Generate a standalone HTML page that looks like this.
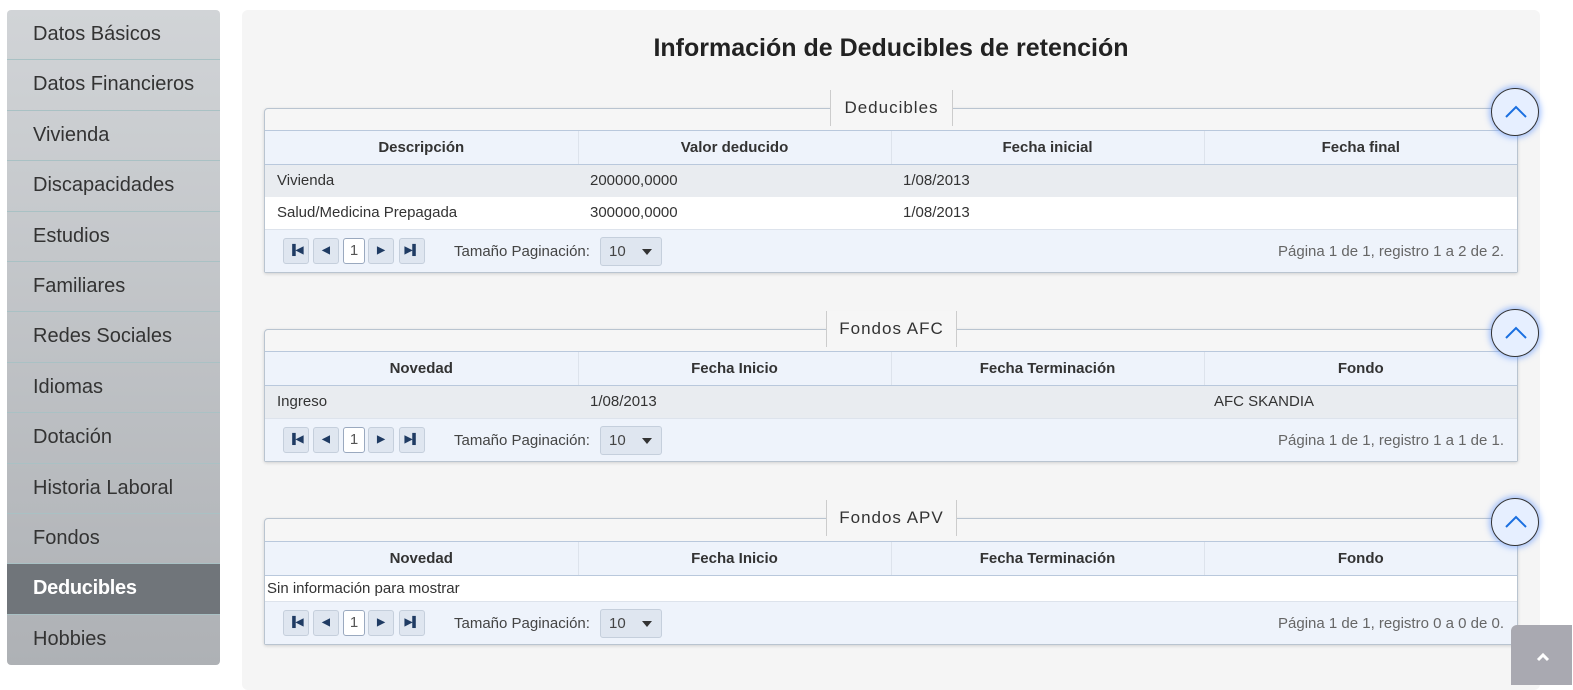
<!DOCTYPE html>
<html><head><meta charset="utf-8"><style>
*{box-sizing:border-box;margin:0;padding:0}
body{width:1573px;height:685px;background:#fff;font-family:"Liberation Sans",sans-serif;position:relative;overflow:hidden}
.side{position:absolute;left:7px;top:10px;width:213px;border-radius:4px;overflow:hidden;background:linear-gradient(#d1d4d7,#aeb1b5)}
.side div{height:50.4px;line-height:48px;padding-left:26px;font-size:20px;color:#333;border-bottom:1px solid #a9c1c4}
.side div.act{background:#70757a;color:#fff;font-weight:bold;letter-spacing:-0.3px}
.side div:last-child{border-bottom:0}
.main{position:absolute;left:242px;top:10px;width:1298px;height:680px;background:#f5f5f5;border-radius:6px}
h1{position:absolute;left:242px;width:1298px;top:34px;text-align:center;font-size:25px;font-weight:bold;color:#222}
.box{position:absolute;left:264px;width:1254px;border:1px solid #b9c4d0;border-radius:4px 4px 2px 2px;background:#f6f6f6;box-shadow:0 1px 3px rgba(0,0,0,.15)}
.leg{position:absolute;height:36px;background:#f6f6f6;border-left:1px solid #ccc;border-right:1px solid #ccc;font-size:17px;letter-spacing:1px;color:#333;text-align:center;line-height:36px}
table{border-collapse:collapse;width:100%;font-size:15px;color:#333}
th{height:34px;background:#eef3fb;font-weight:bold;border-top:1px solid #b9c8dc;border-bottom:1px solid #b9c8dc;border-left:1px solid #dde3ec;width:25%}
th:first-child{border-left:0}
td{height:32px;padding-left:12px;text-align:left}
tr.g td{background:#e9ecf0}
tr.w td{background:#fff}
.pg{height:43px;background:#eef3fb;position:relative;border-top:1px solid #dde3ec;font-size:15px;color:#444}
.b{position:absolute;top:8px;width:26px;height:26px;border:1px solid #c5cfdc;border-radius:3px;background:#dfe6f0;font-size:10px;color:#1f3b63;text-align:center;line-height:24px;font-weight:bold}
.b.n{background:#fff;color:#555;font-size:15px;font-weight:normal;border-color:#9aa9bf;width:22px}
.sel{position:absolute;left:335px;top:7px;width:62px;height:29px;border:1px solid #c5cfdc;border-radius:3px;background:#dfe6f0;padding-left:8px;line-height:27px}
.sel:after{content:"";position:absolute;right:9px;top:11px;border-left:5px solid transparent;border-right:5px solid transparent;border-top:6px solid #333}
.tp{position:absolute;left:189px;top:0;line-height:43px}
.inf{position:absolute;right:13px;top:0;line-height:43px;color:#666}
.circ{position:absolute;width:48px;height:48px;border-radius:50%;border:1px solid #333;background:#e6efff;box-shadow:0 0 6px 2px rgba(80,140,255,.5)}
.up{position:absolute;right:1px;top:625px;width:61px;height:60px;background:#a9a9b1;border-radius:6px 0 0 0}
</style></head><body>
<div class="side">
<div>Datos Básicos</div><div>Datos Financieros</div><div>Vivienda</div><div>Discapacidades</div><div>Estudios</div><div>Familiares</div><div>Redes Sociales</div><div>Idiomas</div><div>Dotación</div><div>Historia Laboral</div><div>Fondos</div><div class="act">Deducibles</div><div>Hobbies</div>
</div>
<div class="main"></div>
<h1>Información de Deducibles de retención</h1>

<div class="box" style="top:108px"><div style="height:21px"></div>
<table><tr><th>Descripción</th><th>Valor deducido</th><th>Fecha inicial</th><th>Fecha final</th></tr>
<tr class="g"><td>Vivienda</td><td>200000,0000</td><td>1/08/2013</td><td></td></tr>
<tr class="w"><td>Salud/Medicina Prepagada</td><td>300000,0000</td><td>1/08/2013</td><td></td></tr></table>
<div class="pg"><div class="b" style="left:18px">▐◀</div><div class="b" style="left:48px">◀</div><div class="b n" style="left:78px">1</div><div class="b" style="left:103px">▶</div><div class="b" style="left:134px">▶▌</div><div class="tp">Tamaño Paginación:</div><div class="sel">10</div><div class="inf">Página 1 de 1, registro 1 a 2 de 2.</div></div></div>
<div class="leg" style="left:830px;top:90px;width:123px">Deducibles</div>
<div class="circ" style="left:1491px;top:88px"><svg width="48" height="48"><path d="M14 28 L24 18 L34 28" fill="none" stroke="#1a6fe0" stroke-width="2"/></svg></div>

<div class="box" style="top:329px"><div style="height:21px"></div>
<table><tr><th>Novedad</th><th>Fecha Inicio</th><th>Fecha Terminación</th><th>Fondo</th></tr>
<tr class="g"><td>Ingreso</td><td>1/08/2013</td><td></td><td style="padding-left:10px">AFC SKANDIA</td></tr></table>
<div class="pg"><div class="b" style="left:18px">▐◀</div><div class="b" style="left:48px">◀</div><div class="b n" style="left:78px">1</div><div class="b" style="left:103px">▶</div><div class="b" style="left:134px">▶▌</div><div class="tp">Tamaño Paginación:</div><div class="sel">10</div><div class="inf">Página 1 de 1, registro 1 a 1 de 1.</div></div></div>
<div class="leg" style="left:826px;top:311px;width:131px">Fondos AFC</div>
<div class="circ" style="left:1491px;top:309px"><svg width="48" height="48"><path d="M14 28 L24 18 L34 28" fill="none" stroke="#1a6fe0" stroke-width="2"/></svg></div>

<div class="box" style="top:518px"><div style="height:22px"></div>
<table><tr><th>Novedad</th><th>Fecha Inicio</th><th>Fecha Terminación</th><th>Fondo</th></tr>
<tr class="w"><td colspan="4" style="height:25px;padding-left:2px">Sin información para mostrar</td></tr></table>
<div class="pg"><div class="b" style="left:18px">▐◀</div><div class="b" style="left:48px">◀</div><div class="b n" style="left:78px">1</div><div class="b" style="left:103px">▶</div><div class="b" style="left:134px">▶▌</div><div class="tp">Tamaño Paginación:</div><div class="sel">10</div><div class="inf">Página 1 de 1, registro 0 a 0 de 0.</div></div></div>
<div class="leg" style="left:826px;top:500px;width:131px">Fondos APV</div>
<div class="circ" style="left:1491px;top:498px"><svg width="48" height="48"><path d="M14 28 L24 18 L34 28" fill="none" stroke="#1a6fe0" stroke-width="2"/></svg></div>

<div class="up"><svg width="61" height="60"><path d="M27 35 L32 30 L37 35" fill="none" stroke="#fff" stroke-width="3"/></svg></div>
</body></html>
